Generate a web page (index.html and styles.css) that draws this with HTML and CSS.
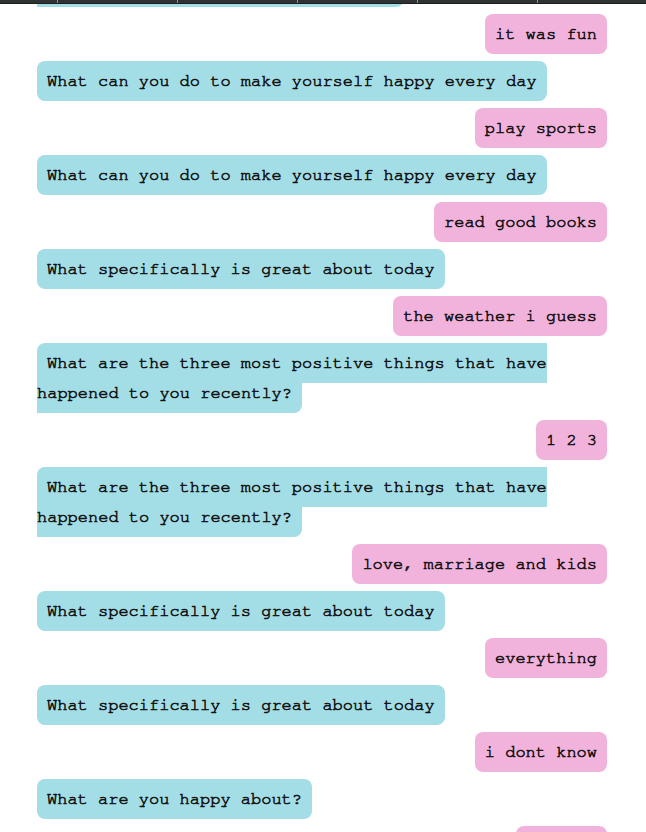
FILE: index.html
```html
<!DOCTYPE html>
<html>
<head>
<meta charset="utf-8">
<link rel="stylesheet" href="styles.css">
</head>
<body>
<div class="topbar">
  <span class="tick"></span><span class="tick"></span><span class="tick"></span><span class="tick"></span><span class="tick"></span>
</div>
<div class="chat">
  <div class="msg bot first"><span class="bubble">What are the three most positive things that have happened to you recently? a b c d e</span></div>
  <div class="msg user"><span class="bubble">it was fun</span></div>
  <div class="msg bot"><span class="bubble">What can you do to make yourself happy every day</span></div>
  <div class="msg user"><span class="bubble">play sports</span></div>
  <div class="msg bot"><span class="bubble">What can you do to make yourself happy every day</span></div>
  <div class="msg user"><span class="bubble">read good books</span></div>
  <div class="msg bot"><span class="bubble">What specifically is great about today</span></div>
  <div class="msg user"><span class="bubble">the weather i guess</span></div>
  <div class="msg bot"><span class="bubble">What are the three most positive things that have happened to you recently?</span></div>
  <div class="msg user"><span class="bubble">1 2 3</span></div>
  <div class="msg bot"><span class="bubble">What are the three most positive things that have happened to you recently?</span></div>
  <div class="msg user"><span class="bubble">love, marriage and kids</span></div>
  <div class="msg bot"><span class="bubble">What specifically is great about today</span></div>
  <div class="msg user"><span class="bubble">everything</span></div>
  <div class="msg bot"><span class="bubble">What specifically is great about today</span></div>
  <div class="msg user"><span class="bubble">i dont know</span></div>
  <div class="msg bot"><span class="bubble">What are you happy about?</span></div>
  <div class="msg user"><span class="bubble">i am ok</span></div>
</div>
</body>
</html>
```
FILE: styles.css
```css
html, body {
  margin: 0;
  padding: 0;
  background: #ffffff;
  overflow: hidden;
}

body {
  font-family: "Nimbus Mono PS", "Nimbus Mono L", "FreeMono", "Courier 10 Pitch", "Liberation Mono", "Courier New", monospace;
  font-size: 17px;
  color: #111111;
  -webkit-text-stroke: 0.6px #111111;
}

.topbar {
  position: fixed;
  top: 0;
  left: 0;
  right: 0;
  height: 3px;
  background: #2f3333;
  border-bottom: 1px solid #1c1e1e;
  display: flex;
  gap: 119px;
  padding-left: 57px;
  z-index: 10;
}

.tick {
  width: 1px;
  height: 3px;
  background: #8c8f8f;
}

.chat {
  padding: 0 39px 0 37px;
}

.msg {
  line-height: 30px;
  margin-bottom: 17px;
}

.msg.first {
  margin-top: -58px;
}

.msg.bot {
  text-align: left;
}

.msg.user {
  text-align: right;
}

.bubble {
  padding: 11px 10px 12px;
  border-radius: 8px;
  -webkit-box-decoration-break: slice;
  box-decoration-break: slice;
}

.bot .bubble {
  background: #a3dde6;
}

.user .bubble {
  background: #f1b2dc;
}
```
